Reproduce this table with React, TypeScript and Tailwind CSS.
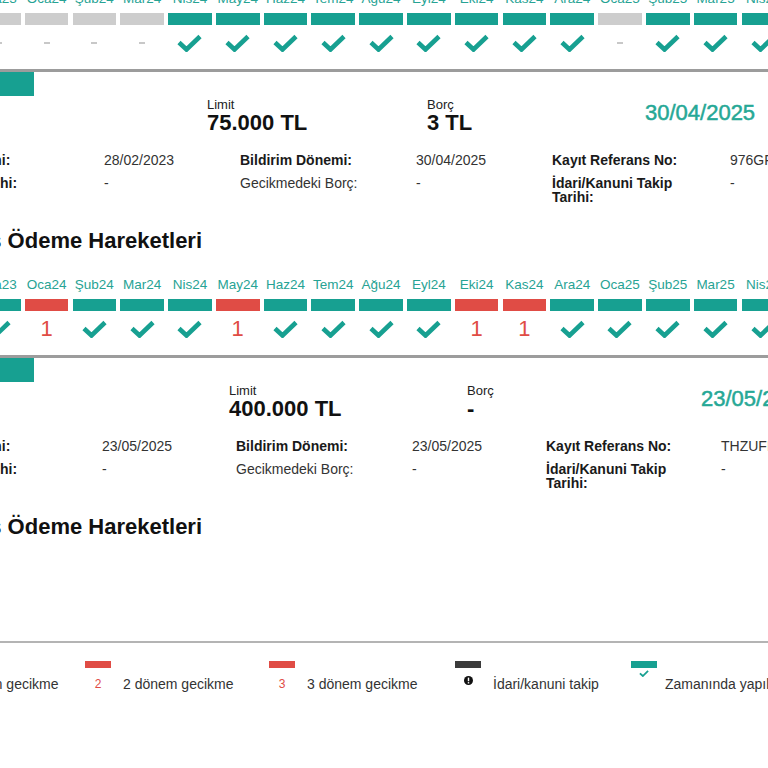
import clsx from 'clsx'

type Status = 'ok' | 'none' | 'late'

const months = [
  'Ara23', 'Oca24', 'Şub24', 'Mar24', 'Nis24', 'May24', 'Haz24', 'Tem24', 'Ağu24',
  'Eyl24', 'Eki24', 'Kas24', 'Ara24', 'Oca25', 'Şub25', 'Mar25', 'Nis25',
]

const topRow: Status[] = [
  'none', 'none', 'none', 'none', 'ok', 'ok', 'ok', 'ok', 'ok',
  'ok', 'ok', 'ok', 'ok', 'none', 'ok', 'ok', 'ok',
]

const secondRow: Status[] = [
  'ok', 'late', 'ok', 'ok', 'ok', 'late', 'ok', 'ok', 'ok',
  'ok', 'late', 'late', 'ok', 'ok', 'ok', 'ok', 'ok',
]

function Check({ className }: { className?: string }) {
  return (
    <svg viewBox="0 0 25 18" className={className} fill="none">
      <path d="M2 8.5 L9.5 15.5 L23 2.5" stroke="currentColor" strokeWidth="4.6" />
    </svg>
  )
}

function MonthRow({ row }: { row: Status[] }) {
  return (
    <div className="-ml-[23px] flex gap-[4.2px]">
      {months.map((m, i) => {
        const s = row[i]
        return (
          <div key={m} className="flex w-[43.6px] shrink-0 flex-col items-center">
            <div className="h-[16px] whitespace-nowrap text-[13.5px] leading-[16px] text-[#27a394]">{m}</div>
            <div
              className={clsx(
                'mt-[6px] h-[12px] w-full',
                s === 'ok' && 'bg-[#17a091]',
                s === 'none' && 'bg-[#cdcdcd]',
                s === 'late' && 'bg-[#e04c45]',
              )}
            />
            <div className="mt-[9px] flex h-[18px] items-center justify-center">
              {s === 'ok' && <Check className="h-[18px] w-[25px] text-[#17a091]" />}
              {s === 'none' && <div className="h-[2px] w-[6px] bg-[#c8c8c8]" />}
              {s === 'late' && <span className="text-[22px] leading-[18px] text-[#e04c45]">1</span>}
            </div>
          </div>
        )
      })}
    </div>
  )
}

type Header = {
  cols: string
  limit: string
  debt: string
  date: string
}

function AccountHeader({ h }: { h: Header }) {
  return (
    <>
      <div className="h-[24px] w-[34px] bg-[#17a091]" />
      <div className={clsx('grid pt-[2px]', h.cols)}>
        <div />
        <div>
          <div className="text-[13px] leading-[14px] text-[#222]">Limit</div>
          <div className="whitespace-nowrap text-[22px] font-bold leading-[21px] text-[#111]">{h.limit}</div>
        </div>
        <div>
          <div className="text-[13px] leading-[14px] text-[#222]">Borç</div>
          <div className="whitespace-nowrap text-[22px] font-bold leading-[21px] text-[#111]">{h.debt}</div>
        </div>
        <div className="mt-[3px] whitespace-nowrap text-[22px] leading-[24px] text-[#26a896] [-webkit-text-stroke:0.5px_#26a896]">
          {h.date}
        </div>
      </div>
    </>
  )
}

type Details = {
  cols: string
  opened: string
  period: string
  ref: string
}

function AccountDetails({ d }: { d: Details }) {
  return (
    <div className={clsx('-ml-[83px] mt-[20px] grid gap-y-[9px] text-[14px] leading-[14px]', d.cols)}>
      <div className="whitespace-nowrap font-bold text-[#1a1a1a]">Limit Dönemi:</div>
      <div className="text-[#333]">{d.opened}</div>
      <div className="font-bold text-[#1a1a1a]">Bildirim Dönemi:</div>
      <div className="text-[#333]">{d.period}</div>
      <div className="font-bold text-[#1a1a1a]">Kayıt Referans No:</div>
      <div className="whitespace-nowrap text-[#333]">{d.ref}</div>

      <div className="whitespace-nowrap font-bold text-[#1a1a1a]">Kapanış Tarihi:</div>
      <div className="text-[#333]">-</div>
      <div className="text-[#333]">Gecikmedeki Borç:</div>
      <div className="text-[#333]">-</div>
      <div className="pr-[30px] font-bold text-[#1a1a1a]">İdari/Kanuni Takip Tarihi:</div>
      <div className="text-[#333]">-</div>
    </div>
  )
}

function Heading() {
  return (
    <h2 className="-ml-[78px] mt-[25px] whitespace-nowrap text-[22px] font-bold leading-[24px] text-[#111]">
      Geçmiş Ödeme Hareketleri
    </h2>
  )
}

function LegendItem({ symbol, label, gap = 'ml-[12px]' }: { symbol: React.ReactNode; label: string; gap?: string }) {
  return (
    <div className="flex items-start">
      <div className="flex w-[26px] flex-col items-center">
        {symbol}
      </div>
      <div className={clsx('mt-[15px] whitespace-nowrap text-[14px] leading-[16px] text-[#333]', gap)}>{label}</div>
    </div>
  )
}

export default function App() {
  return (
    <div className="h-[768px] w-[768px] overflow-hidden bg-white font-['Liberation_Sans',Arial,sans-serif]">
      <div className="-mt-[9px]">
        <MonthRow row={topRow} />
      </div>
      <div className="mt-[17px] h-[3px] bg-[#9c9c9c]" />

      <AccountHeader h={{ cols: 'grid-cols-[207px_220px_218px_1fr]', limit: '75.000 TL', debt: '3 TL', date: '30/04/2025' }} />
      <AccountDetails
        d={{
          cols: 'grid-cols-[187px_136px_176px_136px_178px_1fr]',
          opened: '28/02/2023',
          period: '30/04/2025',
          ref: '976GFK21HT8',
        }}
      />
      <Heading />
      <div className="mt-[24px]">
        <MonthRow row={secondRow} />
      </div>
      <div className="mt-[17px] h-[3px] bg-[#9c9c9c]" />

      <AccountHeader h={{ cols: 'grid-cols-[229px_238px_234px_1fr]', limit: '400.000 TL', debt: '-', date: '23/05/2025' }} />
      <AccountDetails
        d={{
          cols: 'grid-cols-[185px_134px_176px_134px_175px_1fr]',
          opened: '23/05/2025',
          period: '23/05/2025',
          ref: 'THZUFK7M3P',
        }}
      />
      <Heading />

      <div className="mt-[102px] h-[2px] bg-[#b4b4b4]" />

      <div className="-ml-[90px] mt-[18px] grid grid-cols-[175px_184px_186px_176px_1fr]">
        <LegendItem
          label="1 dönem gecikme"
          symbol={
            <>
              <div className="h-[7px] w-[26px] bg-[#e04c45]" />
              <span className="mt-[8px] text-[12px] leading-[16px] text-[#e04c45]">1</span>
            </>
          }
        />
        <LegendItem
          label="2 dönem gecikme"
          symbol={
            <>
              <div className="h-[7px] w-[26px] bg-[#e04c45]" />
              <span className="mt-[8px] text-[12px] leading-[16px] text-[#e04c45]">2</span>
            </>
          }
        />
        <LegendItem
          label="3 dönem gecikme"
          symbol={
            <>
              <div className="h-[7px] w-[26px] bg-[#e04c45]" />
              <span className="mt-[8px] text-[12px] leading-[16px] text-[#e04c45]">3</span>
            </>
          }
        />
        <LegendItem
          label="İdari/kanuni takip"
          symbol={
            <>
              <div className="h-[7px] w-[26px] bg-[#3b3b3b]" />
              <svg viewBox="0 0 10 10" className="mt-[8px] h-[9px] w-[9px]">
                <circle cx="5" cy="5" r="5" fill="#111" />
                <rect x="4.2" y="1.8" width="1.6" height="4" fill="#fff" />
                <rect x="4.2" y="6.8" width="1.6" height="1.5" fill="#fff" />
              </svg>
            </>
          }
        />
        <LegendItem
          label="Zamanında yapıldı"
          gap="ml-[8px]"
          symbol={
            <>
              <div className="h-[7px] w-[26px] bg-[#17a091]" />
              <Check className="mt-[2px] h-[7px] w-[10px] text-[#17a091]" />
            </>
          }
        />
      </div>
    </div>
  )
}
